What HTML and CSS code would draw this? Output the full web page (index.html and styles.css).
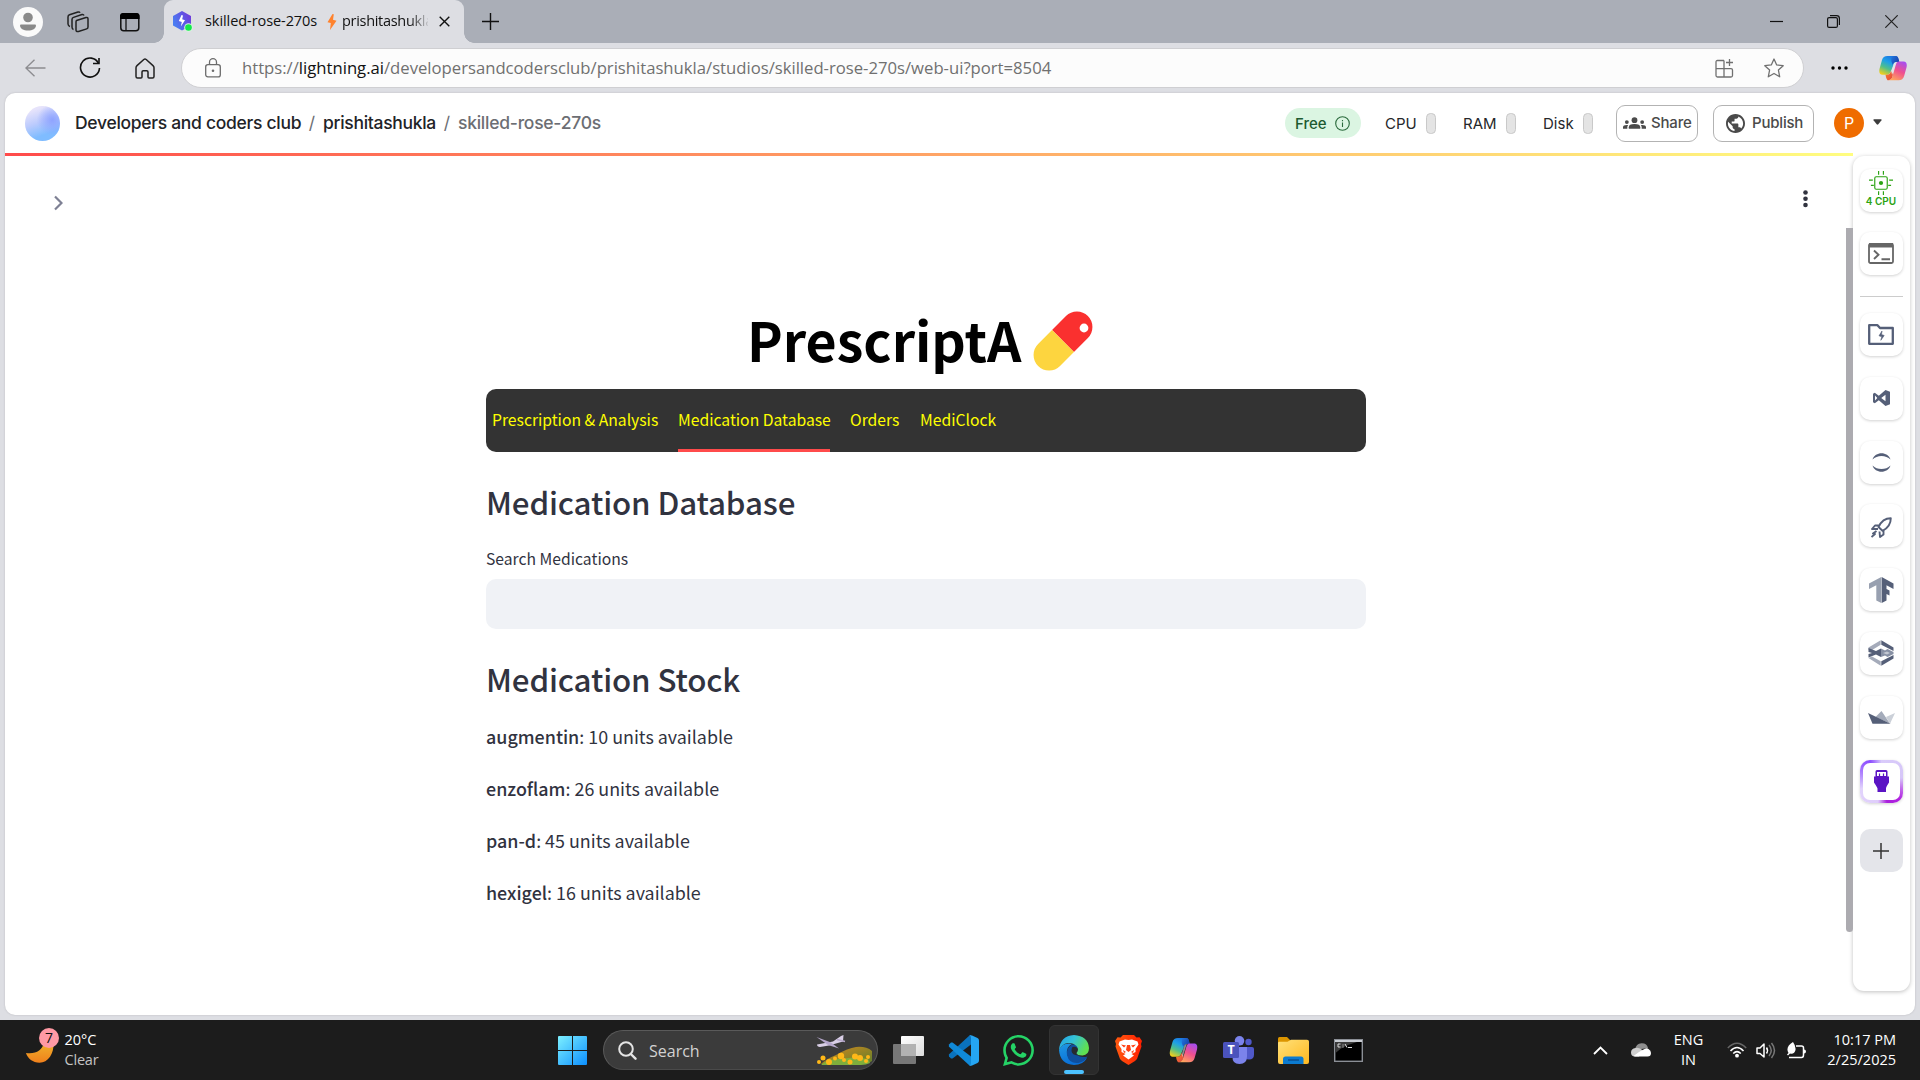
FILE: index.html
```html
<!DOCTYPE html>
<html lang="en">
<head>
<meta charset="utf-8">
<title>skilled-rose-270s</title>
<link rel="stylesheet" href="styles.css">
</head>
<body>
<svg class="defs" width="0" height="0" aria-hidden="true">
  <defs>
    <linearGradient id="hex" x1="0" y1="0.5" x2="1" y2="0"><stop offset="0" stop-color="#4a7df2"/><stop offset="1" stop-color="#7433d8"/></linearGradient>
    <linearGradient id="cpA" x1="0.7" y1="0" x2="0.2" y2="1"><stop offset="0" stop-color="#1b6fe0"/><stop offset="0.35" stop-color="#1d9fe8"/><stop offset="0.65" stop-color="#4fbf8b"/><stop offset="1" stop-color="#f5cf1a"/></linearGradient>
    <linearGradient id="cpB" x1="0.8" y1="0" x2="0.3" y2="1"><stop offset="0" stop-color="#a64df0"/><stop offset="0.5" stop-color="#f0508e"/><stop offset="1" stop-color="#ffa65c"/></linearGradient>
    <linearGradient id="cpC" x1="0" y1="0" x2="1" y2="0.6"><stop offset="0" stop-color="#1f78e0"/><stop offset="1" stop-color="#1a3fa8"/></linearGradient>
    <linearGradient id="cpD" x1="0" y1="0" x2="1" y2="1"><stop offset="0" stop-color="#f8842c"/><stop offset="1" stop-color="#e5413f"/></linearGradient>
    <symbol id="copilot" viewBox="0 0 28 26">
      <path d="M8.500 1H16.500C18.500 1 19 2.500 19.500 4.500L20 6.500H17.500C15.500 6.500 14.800 8 14 11L11.800 16.500C11 19 9.500 19.800 7 19.800H3.500C.5 19.800-.3 17 .6 13.500L3 5C3.800 2.200 5.500 1 8.500 1Z" fill="url(#cpA)"/>
      <path d="M14 1H16.500C18.700 1 19.200 2.500 19.700 4.500L20.300 7H17.500C15.200 7 14.500 7.800 13.700 10L12.300 6C12 3 12.500 1 14 1Z" fill="url(#cpC)"/>
      <path d="M8.500 25.200C7 23.500 6.900 21.500 6.500 19.800H8C10 19.800 11.200 18.800 12 16L14 19C13.500 23 12.500 25.500 8.500 25.200Z" fill="url(#cpD)"/>
      <path d="M20 6.500H24.500C27.500 6.500 28.300 9 27.500 12.500L25.200 20.800C24.400 23.800 22.500 25.300 19.600 25.300H9C12 25.200 13 23 13.800 20.300L16.600 10.500C17.400 7.600 18 6.500 20 6.500Z" fill="url(#cpB)"/>
      <path d="M14.800 8.800Q15.500 7 17.300 6.700L13.300 20Q12.500 19 12.300 17z" fill="#e9e9ec" opacity=".55"/>
    </symbol>
    <linearGradient id="win" x1="0" y1="0" x2="1" y2="1"><stop offset="0" stop-color="#7df0ff"/><stop offset="1" stop-color="#0c8fff"/></linearGradient>
    <linearGradient id="moon" x1="0" y1="0" x2="0" y2="1"><stop offset="0" stop-color="#f0b62c"/><stop offset="1" stop-color="#f0801c"/></linearGradient>
    <linearGradient id="tv" x1="0" y1="0" x2="1" y2="1"><stop offset="0" stop-color="#fff"/><stop offset="1" stop-color="#dcdcdc"/></linearGradient>
    <linearGradient id="edT" x1="0" y1="0" x2="1" y2="0.4"><stop offset="0" stop-color="#1fa0e8"/><stop offset="0.5" stop-color="#35c2d6"/><stop offset="1" stop-color="#5fe052"/></linearGradient>
    <linearGradient id="edL" x1="0" y1="0" x2="0.4" y2="1"><stop offset="0" stop-color="#1f98e4"/><stop offset="1" stop-color="#0a6fd6"/></linearGradient>
    <linearGradient id="brv" x1="0" y1="0" x2="1" y2="0"><stop offset="0" stop-color="#ff5a10"/><stop offset="1" stop-color="#ff1f00"/></linearGradient>
    <linearGradient id="fld" x1="0" y1="0" x2="1" y2="1"><stop offset="0" stop-color="#ffe17a"/><stop offset="1" stop-color="#ffb81f"/></linearGradient>
    <linearGradient id="hill" x1="0" y1="0" x2="1" y2="1"><stop offset="0" stop-color="#d8881c"/><stop offset="1" stop-color="#5d7f2c"/></linearGradient>
  </defs>
</svg>

<div class="screen">
  <div class="tabstrip">
    <div class="strip-left">
      <svg width="30" height="30" viewBox="0 0 30 30"><circle cx="15" cy="15" r="15" fill="#fafafa"/><circle cx="15" cy="10.500" r="4.800" fill="#8a8a8a"/><path d="M8 17.500h14a1 1 0 0 1 1 1c0 3-3.500 5-8 5s-8-2-8-5a1 1 0 0 1 1-1z" fill="#8a8a8a"/></svg>
      <svg width="22" height="22" viewBox="0 0 22 22" fill="none" stroke="#222" stroke-width="1.500" stroke-linejoin="round"><path d="M9.500 9.500 19 6.500q2-.4 2 1.500v8q0 1.500-1.300 1.900L11.500 20.500Q9 21 9 19v-8q0-1 .5-1.500z"/><path d="M6.500 18.500Q5 18 5 16V8.500Q5 7 6.500 6.400L15 3.500q1.500-.4 2 1"/><path d="M3 15.500Q1.200 15 1 13V6Q1 4.200 2.500 3.700L11 1q1.500-.4 2 .8"/></svg>
      <svg width="20" height="20" viewBox="0 0 20 20"><rect x=".8" y="1.800" width="18" height="17" rx="3" fill="none" stroke="#111" stroke-width="1.500"/><path d="M0 7V4Q0 1 3 1h13.500q3 0 3 3v3z" fill="#000"/><path d="M6 7v11" stroke="#111" stroke-width="1.300"/></svg>
    </div>
    <div class="tab">
      <svg width="20" height="21" viewBox="0 0 20 21"><path d="M9 0 18 5V14.500L9 19.500 0 14.500V5z" fill="url(#hex)"/><path d="M8.500 4 5.800 10l3 1L7.800 15.500 12 9.300l-2.800-1L10 4.500z" fill="#fff"/><circle cx="15.500" cy="16.500" r="4.300" fill="#d8f5df"/><circle cx="15.500" cy="16.500" r="3.300" fill="#15e84b"/></svg>
      <span class="tab-title tt-a">skilled-rose-270s</span>
      <svg class="bolt" width="10" height="16" viewBox="0 0 10 16"><path d="M5.500 0 .5 8.200l3.300.8L3 16l6.500-9.300L6 5.800 6.800.2z" fill="#ff822d"/></svg>
      <span class="tab-title tt-b">prishitashukla</span>
      <svg class="tab-close" width="11" height="11" viewBox="0 0 11 11"><path d="M.7.700 10.300 10.300M10.300.700.7 10.300" stroke="#111" stroke-width="1.400"/></svg>
    </div>
    <svg class="newtab" width="17" height="17" viewBox="0 0 17 17"><path d="M8.500 0v17M0 8.500h17" stroke="#111" stroke-width="1.400"/></svg>
    <div class="winbtns">
      <svg width="13" height="13" viewBox="0 0 13 13"><path d="M0 6.500h13" stroke="#111" stroke-width="1.200"/></svg>
      <svg width="13" height="13" viewBox="0 0 13 13" fill="none" stroke="#111" stroke-width="1.200"><rect x=".6" y="2.600" width="9.800" height="9.800" rx="1.500"/><path d="M3 .7h6.500q2.900 0 2.900 2.800V10"/></svg>
      <svg width="13" height="13" viewBox="0 0 13 13"><path d="M.3.300 12.700 12.700M12.700.300.3 12.700" stroke="#222" stroke-width="1.200"/></svg>
    </div>
  </div>

  <div class="toolbar">
    <svg class="nav-ic back" width="21" height="18" viewBox="0 0 21 18" fill="none" stroke="#8c8c90" stroke-width="1.400"><path d="M9.500.8.9 9l8.600 8.200M1 9h19.500"/></svg>
    <svg class="nav-ic reload" width="22" height="22" viewBox="0 0 22 22" fill="none" stroke="#111" stroke-width="1.600"><path d="M19.500 6.300A9.500 9.500 0 1 0 20.500 11"/><path d="M20 1v5.500h-6"/></svg>
    <svg class="nav-ic home" width="20" height="21" viewBox="0 0 20 21" fill="none" stroke="#222" stroke-width="1.500" stroke-linejoin="round"><path d="M8.800 1.500Q10 .5 11.200 1.500L18 7.600q1 .9 1 2.200V18.500q0 1.500-1.500 1.500H14q-1 0-1-1V14q0-1.200-1.200-1.200H8.200Q7 12.800 7 14v5q0 1-1 1H2.500Q1 20 1 18.500V9.800Q1 8.500 2 7.600z"/></svg>
    <div class="omnibox">
      <svg width="16" height="20" viewBox="0 0 16 20" fill="none" stroke="#6c6c6c" stroke-width="1.300"><rect x=".7" y="6.700" width="14.600" height="12.200" rx="2.200"/><path d="M4.500 6.500V4.200a3.500 3.500 0 0 1 7 0V6.500"/><circle cx="8" cy="12.800" r="1.300" fill="#6c6c6c" stroke="none"/></svg>
      <span class="url">https://<b>lightning.ai</b>/developersandcodersclub/prishitashukla/studios/skilled-rose-270s/web-ui?port=8504</span>
      <svg class="apps" width="19" height="19" viewBox="0 0 19 19" fill="none" stroke="#707070" stroke-width="1.300"><path d="M9 1.500H2.500Q1 1.500 1 3V16.500Q1 18 2.500 18H16q1.500 0 1.500-1.500V11Q17.500 9.700 16 9.700H1M9 1.500V18M14.500 0v7M11 3.500h7"/></svg>
      <svg width="20" height="20" viewBox="0 0 20 20" fill="none" stroke="#707070" stroke-width="1.300" stroke-linejoin="round"><path d="M10 1 12.700 6.900 19.200 7.700 14.400 12 15.700 18.800 10 15.500 4.300 18.800 5.600 12 .8 7.700 7.300 6.900z"/></svg>
    </div>
    <svg class="more" width="17" height="4" viewBox="0 0 17 4"><circle cx="2" cy="2" r="1.700"/><circle cx="8.500" cy="2" r="1.700"/><circle cx="15" cy="2" r="1.700"/></svg>
    <svg class="cop" width="28" height="26"><use href="#copilot"/></svg>
  </div>

  <div class="page">
    <header class="appbar">
      <span class="orb"></span>
      <span class="crumb c1">Developers and coders club</span>
      <span class="slash">/</span>
      <span class="crumb c2">prishitashukla</span>
      <span class="slash">/</span>
      <span class="crumb c3">skilled-rose-270s</span>
      <div class="free"><span>Free</span><svg width="15" height="15" viewBox="0 0 15 15" fill="none" stroke="#2a6a3c" stroke-width="1.100"><circle cx="7.500" cy="7.500" r="6.800"/><path d="M7.500 6.500v4.500M7.500 4v1.300"/></svg></div>
      <div class="meter m1"><span>CPU</span><i></i></div>
      <div class="meter m2"><span>RAM</span><i></i></div>
      <div class="meter m3"><span>Disk</span><i></i></div>
      <div class="btn share"><svg width="23" height="12" viewBox="0 0 24 12" fill="#4a4a4a"><circle cx="12" cy="3" r="3"/><path d="M6 12v-1.600Q6 7 12 7t6 3.400V12z"/><circle cx="4" cy="5" r="2"/><circle cx="20" cy="5" r="2"/><path d="M0 12v-1.500Q0 8 4 8q.8 0 1.500.2Q4.500 9.200 4.500 10.500V12zM24 12v-1.500Q24 8 20 8q-.8 0-1.500.2 1 1 1 2.300V12z"/></svg><span>Share</span></div>
      <div class="btn publish"><svg width="19" height="19" viewBox="2 2 20 20" fill="#4a4a4a"><path d="M12 2C6.480 2 2 6.480 2 12s4.480 10 10 10 10-4.480 10-10S17.520 2 12 2zm-1 17.930c-3.950-.49-7-3.850-7-7.930 0-.62.080-1.210.21-1.790L9 15v1c0 1.100.9 2 2 2v1.930zm6.900-2.540c-.26-.81-1-1.390-1.900-1.390h-1v-3c0-.55-.45-1-1-1H8v-2h2c.55 0 1-.45 1-1V7h2c1.100 0 2-.9 2-2v-.41c2.930 1.190 5 4.060 5 7.410 0 2.080-.8 3.970-2.100 5.390z"/></svg><span>Publish</span></div>
      <span class="user">P</span>
      <svg class="caret" width="9" height="6" viewBox="0 0 9 6"><path d="M1 .3h7q1 0 .5 1L5.300 5.300q-.8.800-1.600 0L.5 1.300Q0 .3 1 .3z" fill="#3c3c3c"/></svg>
    </header>
    <div class="body">
      <div class="stage">
        <div class="rainbow"></div>
        <div class="stage-top">
          <svg width="9" height="16" viewBox="0 0 9 16"><path d="M1 1.500 7.500 8 1 14.500" fill="none" stroke="#7e8094" stroke-width="2.200"/></svg>
          <svg width="5" height="18" viewBox="0 0 5 18" fill="#31333f"><circle cx="2.500" cy="2.500" r="2.300"/><circle cx="2.500" cy="8.800" r="2.300"/><circle cx="2.500" cy="15" r="2.300"/></svg>
        </div>
        <main class="content">
          <div class="hero"><h1>PrescriptA</h1><svg width="60" height="60" viewBox="0 0 60 60"><g transform="rotate(45 30 30)"><path d="M14.500 30V10.300a15.500 15.500 0 0 1 31 0V30z" fill="#fa302f"/><path d="M14.500 30V49.700a15.500 15.500 0 0 0 31 0V30z" fill="#fdd53f"/></g><circle cx="51" cy="17" r="4.400" fill="#fff"/></svg></div>
          <nav class="tabs"><span class="t1">Prescription &amp; Analysis</span><span class="t2 on">Medication Database</span><span class="t3">Orders</span><span class="t4">MediClock</span></nav>
          <h2 class="h-db">Medication Database</h2>
          <label>Search Medications</label>
          <div class="field"></div>
          <h2 class="h-st">Medication Stock</h2>
          <p><strong>augmentin</strong><span>: 10 units available</span></p>
          <p><strong>enzoflam</strong><span>: 26 units available</span></p>
          <p><strong>pan-d</strong><span>: 45 units available</span></p>
          <p><strong>hexigel</strong><span>: 16 units available</span></p>
        </main>
        <div class="scrollthumb"></div>
      </div>
      <aside class="rail">
        <div class="tile cpu"><svg width="24" height="24" viewBox="0 0 25 25" fill="none" stroke="#2aa312" stroke-width="1.200"><rect x="6" y="6" width="13" height="13" rx="1.500"/><circle cx="12.500" cy="12.500" r="2.200" fill="#2aa312" stroke="none"/><path d="M10 0v4M15 0v4M10 21v4M15 21v4M0 9.500h4M2 15h3M21 9.500h4M20 15h3"/></svg><span>4 CPU</span></div>
        <div class="tile term"><svg width="26" height="21" viewBox="0 0 26 21"><rect x="1" y="1" width="24" height="19" rx="1.500" fill="none" stroke="#666" stroke-width="1.800"/><path d="M1 0h24v4.500H1z" fill="#666"/><path d="M6 7.500 10.500 11.800 6 16M13.500 16.300H22" fill="none" stroke="#666" stroke-width="1.900"/></svg></div>
        <div class="rule"></div>
        <div class="tile"><svg width="26" height="21" viewBox="0 0 26 21"><path d="M1.200 19.800V1.200H9.500L12 4H24.800V19.800z" fill="none" stroke="#555f78" stroke-width="2.300" stroke-linejoin="round"/><path d="M14 7 11 11.800l2.800 1-1 3.500L16.200 11.500l-2.700-1z" fill="#555f78" stroke="#555f78" stroke-width=".6"/></svg></div>
        <div class="tile"><svg width="17" height="16" viewBox="0 0 17 16" fill="#555f78"><path fill-rule="evenodd" d="M12.500 0 17 1.800V14.200L12.500 16 5.800 10.200 1.800 13.200 0 12.300V3.700L1.800 2.800 5.800 5.800zM12.500 4.800 8.200 8 12.500 11.200zM2 5.600V10.400L4.300 8z"/></svg></div>
        <div class="tile"><svg width="19" height="19" viewBox="0 0 19 19" fill="#555f78"><path d="M.5 6.500C3-1.800 16-1.800 18.500 6.500 14 1.800 5 1.800.5 6.500zM.5 12.500C3 20.800 16 20.800 18.500 12.500 14 17.200 5 17.200.5 12.500z"/></svg></div>
        <div class="tile rocket"><svg width="21" height="21" viewBox="0 0 21 21" fill="none" stroke="#555f78" stroke-width="1.900" stroke-linejoin="round"><path d="M7.500 10C10 4.500 14.500 1.200 19.800 1.200 19.800 6.500 17 11 11.500 13.800zM8.300 8.500H4L1 12l6 0M12.500 13v4.500L9 20 8.500 14.500M5.500 14 2 16.500 4 17 .5 20"/></svg></div>
        <div class="tile"><svg width="25" height="26" viewBox="0 0 25 26"><path d="M12.300 0 0 6.500V12L7.300 8.200V23.500L12.300 26z" fill="#98a0b0"/><path d="M12.700 0V26L17.500 23.500V17L20.500 18.500V13.500L17.500 12V8.300L24.500 12V6.500z" fill="#555f78"/></svg></div>
        <div class="tile"><svg width="26" height="26" viewBox="0 0 26 26"><path d="M.5 7.500 12.700.3V4.700L4.500 9.800V12.200L.5 10zM.5 18 12.700 25.700V21.300L4 16.500z" fill="#a5abba"/><path d="M13.300.3 25.500 7.500V11L13.300 4.800zM13.300 25.700 25.500 18.500V15L13.300 21.300zM.5 8 8 11 13 8.500V17L8 14.500.5 17.500V14L4 13 .5 12z" fill="#555f78"/><path d="M13 8.500 17 10.500 19.500 9 25.500 12V14L19.500 17 17 15.500 13 17z" fill="#8790a4"/><path d="M15 13 19 11.500 22 13 19 14.500z" fill="#c3c8d2"/></svg></div>
        <div class="tile"><svg width="27" height="13" viewBox="0 0 27 13"><path d="M7.500 6 13.500 0 22 12.500z" fill="#a4abba"/><path d="M18 6 27 2 22 12.800z" fill="#cbd0d8"/><path d="M0 2 22.500 12.800H4.500z" fill="#555f78"/></svg></div>
        <div class="tile active"><svg width="15" height="22" viewBox="0 0 15 22"><path d="M1.500 1.500Q1.500 0 3 0h9q1.500 0 1.500 1.500V6.500H15V12.500Q12 17 12 18.500V22H3.500V18.500Q3 17 0 12.500V6.500H1.500z" fill="#5b14c4"/><path d="M3 2h9v4H3z" fill="#fff"/><path d="M5.500 3.500V6M9.500 3.500V6" stroke="#5b14c4" stroke-width="1.200"/></svg></div>
        <div class="tile add"><svg width="16" height="16" viewBox="0 0 16 16"><path d="M8 0v16M0 8h16" stroke="#333" stroke-width="1.500"/></svg></div>
      </aside>
    </div>
  </div>

  <footer class="taskbar">
    <div class="weather">
      <div class="moon"><svg width="28" height="26" viewBox="0 0 28 26"><path d="M27.500 6C28 17 22 25.700 13.500 25.700 7 25.700 1.500 21.500 0 16 10 17.500 16 13 18 6Q22 2 27.500 6z" fill="url(#moon)"/></svg><span class="badge">7</span></div>
      <div class="stack"><span class="w1">20°C</span><span class="w2">Clear</span></div>
    </div>
    <div class="dock">
      <div class="slot start"><svg width="29" height="29" viewBox="0 0 29 29" fill="url(#win)"><path d="M1 0H14V14H0V1Q0 0 1 0zM15 0H28Q29 0 29 1V14H15zM0 15H14V29H1Q0 29 0 28zM15 15H29V28Q29 29 28 29H15z"/></svg></div>
      <div class="search">
        <svg width="19" height="19" viewBox="0 0 19 19" fill="none" stroke="#e4e4e4"><circle cx="8" cy="8" r="6.800" stroke-width="2"/><path d="M12.800 13 17.500 17.700" stroke-width="2.400" stroke-linecap="round"/></svg>
        <span>Search</span>
        <svg class="art" width="58" height="31" viewBox="0 0 58 31"><path d="M20 20Q32 13 40 12 50 11 56 16V26Q52 29 45 29H5Q10 24 20 20z" fill="url(#hill)"/><path d="M5 30Q12 23 25 24 40 21 52 24L54 28Q50 30 45 30z" fill="#7fae3c"/><g fill="#ffb818"><circle cx="3" cy="27" r="2"/><circle cx="7" cy="23" r="2.500"/><circle cx="13" cy="27" r="3"/><circle cx="19" cy="23.500" r="2"/><circle cx="25" cy="21" r="3.200"/><circle cx="28" cy="25" r="2"/><circle cx="34" cy="27" r="2.500"/><circle cx="39" cy="21.500" r="3"/><circle cx="44" cy="23" r="3"/><circle cx="50" cy="26" r="2"/><circle cx="52" cy="22" r="2"/></g><path d="M1 9.500 17 6.500 25 1 27.500 0 27 6.500 13 10.500 4 12Q1 11.500 1 9.500z" fill="#d9cfe6"/><path d="M.5 2 15 7.500 23 13.500 12 10z" fill="#b6a8cc"/><path d="M21 4.500 29 6.500" stroke="#b6a8cc" stroke-width="1.500"/></svg>
      </div>
      <div class="slot tview"><svg width="31" height="28" viewBox="0 0 31 28"><rect x="8" y="0" width="23" height="20" rx="1" fill="url(#tv)"/><rect x="0" y="8" width="23" height="20" rx="1" fill="#777"/><path d="M8 8H23V20H8z" fill="#b2b2b2"/></svg></div>
      <div class="slot"><svg width="31" height="31" viewBox="0 0 31 31"><path d="M22 0 .8 19.500 1 21.500 3 23.500 4.500 23.500 23 9.500V.8z" fill="#0a72bd"/><path d="M22 31 .8 11.500 1 9.500 3 7.500 4.500 7.500 23 21.500V30z" fill="#1089d8"/><path d="M21.500 30.800Q23 31 24 30.500L29.500 28Q31 27.200 31 25.500V5.500Q31 3.800 29.500 3L24 .4Q22.500 0 21.500.3 23 1 23 3V28Q23 30 21.500 30.800z" fill="#25a5f2"/></svg></div>
      <div class="slot"><svg width="31" height="31" viewBox="0 0 24 24" fill="#25d366"><path d="M17.472 14.382c-.297-.149-1.758-.867-2.030-.967-.273-.099-.471-.148-.67.150-.197.297-.767.966-.94 1.164-.173.199-.347.223-.644.075-.297-.15-1.255-.463-2.390-1.475-.883-.788-1.480-1.761-1.653-2.059-.173-.297-.018-.458.130-.606.134-.133.298-.347.446-.52.149-.174.198-.298.298-.497.099-.198.050-.371-.025-.52-.075-.149-.669-1.612-.916-2.207-.242-.579-.487-.5-.669-.51-.173-.008-.371-.010-.57-.010-.198 0-.52.074-.792.372-.272.297-1.040 1.016-1.040 2.479 0 1.462 1.065 2.875 1.213 3.074.149.198 2.096 3.200 5.077 4.487.709.306 1.262.489 1.694.625.712.227 1.360.195 1.871.118.571-.085 1.758-.719 2.006-1.413.248-.694.248-1.289.173-1.413-.074-.124-.272-.198-.57-.347m-5.421 7.403h-.004a9.870 9.870 0 0 1-5.031-1.378l-.361-.214-3.741.982.998-3.648-.235-.374a9.860 9.860 0 0 1-1.510-5.260c.001-5.450 4.436-9.884 9.888-9.884 2.640 0 5.122 1.030 6.988 2.898a9.825 9.825 0 0 1 2.893 6.994c-.003 5.450-4.437 9.884-9.885 9.884m8.413-18.297A11.815 11.815 0 0 0 12.050 0C5.495 0 .16 5.335.157 11.892c0 2.096.547 4.142 1.588 5.945L.057 24l6.305-1.654a11.882 11.882 0 0 0 5.683 1.448h.005c6.554 0 11.890-5.335 11.893-11.893a11.821 11.821 0 0 0-3.480-8.413z"/></svg></div>
      <div class="slot current"><svg width="30" height="30" viewBox="0 0 30 30"><path d="M0 15Q4 7 13 9 7 12 8 19 10 27 19 26.500 24 26 28 23 24 30 15 30 1 29 0 15z" fill="url(#edL)"/><path d="M13 9.500Q19 9 20 13 17 12.500 16.500 16 17 21.500 24 22 27 22 28.500 21.500 26 26.500 19.500 28 10 29 8 20 7 13 13 9.500z" fill="#0f4f9e"/><path d="M13.500 12Q18 11 18.500 14 17 15 17 17.500 17.500 19.500 19 20.500 13 20 12.500 16 12.500 13 13.500 12z" fill="#262a30"/><path d="M0 15Q1 1 15 0 29 1 30 13 30 20 23.500 20.500 18 20.500 17.500 18 20.500 14.500 17.500 11 14 7.500 8.500 8 3 9 0 15z" fill="url(#edT)"/></svg><i></i></div>
      <div class="slot"><svg width="27" height="30" viewBox="0 0 27 30"><path d="M8 0H19L21.500 2.500 24.500 2.300 27 6 26 9 26.500 11.500 22 24 20 26 13.500 30 7 26 5 24 .5 11.500 1 9 0 6 2.500 2.300 5.500 2.500z" fill="url(#brv)"/><path d="M13.500 5 17 4.500 22.500 6.500 23.500 9.500 20.500 14 20.500 17 16.500 19 19 20.500 13.500 24.500 8 20.500 10.500 19 6.500 17V14L3.500 9.500 4.500 6.500 10 4.500z" fill="#fff"/><path d="M6 9.500 11 10.500 9 12.500zM21 9.500 16 10.500 18 12.500zM12 10h3l1 5-2.500 2L11 15zM8 15l3 2-2 1zM19 15l-3 2 2 1z" fill="#ff4012"/></svg></div>
      <div class="slot cp"><svg width="29" height="26"><use href="#copilot"/></svg></div>
      <div class="slot"><svg width="31" height="28" viewBox="0 0 31 28"><circle cx="25.500" cy="6" r="3.200" fill="#5059c9"/><path d="M20 11h9q2 0 2 2v5.500q0 5-5 5t-6-5z" fill="#5059c9"/><circle cx="16.500" cy="4.800" r="4.800" fill="#7b83eb"/><path d="M10 11h14v9.500q0 7.500-7.500 7.500T9.500 20z" fill="#7b83eb"/><rect x="0" y="6" width="16" height="16" rx="1.500" fill="#4b53bc"/><text class="teams-t" x="8" y="18.300" text-anchor="middle">T</text></svg></div>
      <div class="slot"><svg width="31" height="27" viewBox="0 0 31 27"><path d="M0 1.500Q0 0 1.500 0H9L12.500 3.500V8H0z" fill="#dc9500"/><path d="M0 6Q0 4.800 1.200 4.800H9.500L13 2.800H29Q31 2.800 31 4.500V25Q31 27 29 27H2Q0 27 0 25z" fill="url(#fld)"/><path d="M5 27V22Q5 19.500 7.500 19.500h15.500Q25.500 19.500 25.500 22V27z" fill="#0c7bd0"/><path d="M10 23h11" stroke="#0a4f92" stroke-width="1.500"/></svg></div>
      <div class="slot"><svg width="29" height="23" viewBox="0 0 29 23"><rect x=".7" y=".7" width="27.600" height="21.600" fill="#000" stroke="#8b8f96" stroke-width="1.400"/><path d="M1.500 1.500H27.500L14 6 7 9.500 1.500 14z" fill="#3b3b3b"/><path d="M1 2h27" stroke="#c8ccd2" stroke-width="2"/><path d="M6.500 5H4v3h2.500M9 5.500v1M9 7.500v1M11 5l2 3.500M14 8.500h4" stroke="#ddd" fill="none"/></svg></div>
    </div>
    <div class="tray">
      <svg class="up" width="15" height="9" viewBox="0 0 15 9"><path d="M1 8 7.500 1.500 14 8" fill="none" stroke="#fff" stroke-width="1.800"/></svg>
      <svg class="cloud" width="20" height="14" viewBox="0 0 20 14"><path d="M4 7Q5 0 11 .3 16 .5 17 5z" fill="#8f8f8f"/><path d="M0 9.500Q0 5.500 4.500 5 8 4 12 7.500L8 13.500H4Q0 13.500 0 9.500z" fill="#cfcfcf"/><path d="M2.500 13Q8 8.500 13.500 6 16 4.500 17.500 6 20 7.500 20 10 20 13.500 16.500 13.500H4z" fill="#fff"/></svg>
      <div class="stack lang"><span class="l1">ENG</span><span class="l2">IN</span></div>
      <svg class="wifi" width="20" height="16" viewBox="0 0 20 16" fill="none"><path d="M.8 6Q10-3.500 19.200 6" stroke="#666" stroke-width="1.500"/><path d="M3.500 9Q10 2 16.500 9M6.200 11.500Q10 7.800 13.800 11.500" stroke="#fff" stroke-width="1.600"/><circle cx="10" cy="13.700" r="1.900" fill="#fff"/></svg>
      <svg class="vol" width="20" height="17" viewBox="0 0 20 17" fill="none" stroke="#fff" stroke-width="1.500"><path d="M1 6H4L8 2V15L4 11.500H1z" stroke-linejoin="round"/><path d="M10.500 5.500q2 3 0 6"/><path d="M13 3q4.500 5.500 0 11M15.500 1q6 7.500 0 15" stroke="#777"/></svg>
      <svg class="bat" width="20" height="17" viewBox="0 0 20 17"><path d="M10 4H15.500Q17.500 4 17.500 6V13Q17.500 15.500 15.500 15.500H3" fill="none" stroke="#fff" stroke-width="1.500"/><path d="M18 7.500q2 0 2 2t-2 2z" fill="#fff"/><path d="M7 0Q10 4 9.500 8 8.500 12.500 4 11.500L2 13.500 1 12.500 2.500 11Q-1 5 7 0z" fill="#fff"/></svg>
      <div class="stack clock"><span class="k1">10:17 PM</span><span class="k2">2/25/2025</span></div>
    </div>
  </footer>
</div>
</body>
</html>
```
FILE: styles.css
```css
* { box-sizing: border-box; }
body { margin: 0; background: #dddee3; font-family: "Open Sans", "Noto Sans", sans-serif; }
svg { display: block; flex: none; }
.defs { position: absolute; }
span, h1, h2, label { white-space: nowrap; }
.screen { width: 1920px; height: 1080px; display: flex; flex-direction: column; overflow: hidden; }

/* tab strip */
.tabstrip { height: 43px; background: #aaaeb7; display: flex; align-items: center; }
.strip-left { width: 164px; padding-left: 13px; display: flex; align-items: center; gap: 24px; }
.strip-left svg:nth-child(3) { margin-left: 7px; }
.tab { position: relative; width: 300px; height: 43px; background: #dddee3; border-radius: 9px 9px 0 0; display: flex; align-items: center; padding-left: 9px; }
.tab::before, .tab::after { content: ""; position: absolute; bottom: 0; width: 10px; height: 10px; }
.tab::before { left: -10px; background: radial-gradient(circle at 0 0, transparent 9.5px, #dddee3 10px); }
.tab::after { right: -10px; background: radial-gradient(circle at 100% 0, transparent 9.5px, #dddee3 10px); }
.tab-title { font-size: 14.5px; line-height: 20px; color: #111; margin-top: -2px; }
.tt-a { margin-left: 12px; width: 122px; letter-spacing: -0.07px; }
.bolt { margin-right: 5px; }
.tt-b { width: 86px; overflow: hidden; letter-spacing: -0.3px; -webkit-mask-image: linear-gradient(90deg, #000 68px, transparent 88px); mask-image: linear-gradient(90deg, #000 68px, transparent 88px); }
.tab-close { margin-left: 11px; }
.newtab { margin-left: 18px; }
.winbtns { margin-left: auto; margin-right: 22.5px; display: flex; gap: 44.3px; }

/* toolbar */
.toolbar { height: 50px; display: flex; align-items: center; }
.back { margin-left: 25px; }
.reload { margin-left: 33px; }
.home { margin-left: 34px; }
.omnibox { margin-left: 26px; width: 1623px; height: 40px; border: 1px solid #cfcfd2; border-radius: 20px; background: #fcfcfc; display: flex; align-items: center; padding: 0 19px 0 23px; }
.url { margin: -2px 0 0 21px; font-size: 16.7px; color: #707070; letter-spacing: -0.01px; }
.url b { font-weight: 400; color: #111; }
.apps { margin-left: auto; margin-right: 30px; }
.more { margin-left: 27px; }
.cop { margin-left: 31px; }

/* page */
.page { height: 922px; width: 1910px; margin: 0 0 0 5px; background: #fff; border-radius: 10px; display: flex; flex-direction: column; box-shadow: 0 0 2px #b5b5ba; }
.appbar { height: 60px; padding-left: 20px; display: flex; align-items: center; font-family: Inter, "Liberation Sans", sans-serif; }
.orb { width: 35px; height: 35px; border-radius: 50%; background: radial-gradient(circle at 78% 40%, #8fa3ff 0, rgba(143,163,255,0) 45%), linear-gradient(160deg, #e6e3fb 15%, #bccbfd 45%, #7fbcff 75%); }
.crumb { font-size: 17.5px; font-weight: 500; color: #222327; margin-top: -1px; letter-spacing: -0.3px; }
.c1 { margin-left: 15px; width: 226px; }
.slash { width: 22px; margin-top: -1px; text-align: center; font-size: 17.5px; color: #6c6e73; }
.c2 { width: 113px; }
.c3 { color: #6c6e73; letter-spacing: -0.25px; }
.free { margin-left: auto; width: 76px; height: 30px; border-radius: 15px; background: #dbf5e2; color: #1d5a31; font-size: 15px; font-weight: 500; display: flex; align-items: center; padding-left: 10px; }
.free span { width: 40px; }
.meter { display: flex; align-items: center; justify-content: space-between; font-size: 15px; color: #26272b; }
.meter i { width: 10px; height: 21px; border-radius: 4.5px; background: #e4e4e4; border: 1px solid #c9c9c9; }
.m1 { width: 51px; margin-left: 24px; }
.m2 { width: 53px; margin-left: 27px; }
.m3 { width: 50px; margin-left: 27px; }
.btn { height: 37px; border: 1px solid #b3b3b3; border-radius: 9px; display: flex; align-items: center; font-size: 15px; font-weight: 500; color: #4a4a4a; }
.btn span { margin-top: -1px; letter-spacing: -0.2px; }
.share { width: 82px; margin-left: 23px; padding-left: 6px; gap: 5px; }
.publish { width: 101px; margin-left: 15px; padding-left: 12px; gap: 7px; }
.user { margin-left: 20px; width: 30px; height: 30px; border-radius: 50%; background: #ef6c00; color: #fff; font-size: 16px; line-height: 30px; text-align: center; }
.caret { margin: 0 33px 3px 9px; }
.body { display: flex; height: 862px; }
.stage { width: 1848px; position: relative; }
.rainbow { height: 3px; background: linear-gradient(90deg, #ff4b4b, #fffd80); }
.stage-top { display: flex; justify-content: space-between; padding: 37px 45px 0 49px; height: 72px; }
.stage-top svg:first-child { margin-top: 2px; }
.stage-top svg:last-child { margin-top: -3px; }
.content { width: 880px; margin: 0 0 0 481px; font-family: "Noto Sans CJK SC", "Noto Sans", sans-serif; color: #31333f; }
.hero { height: 161px; padding: 83px 0 0 261px; display: flex; gap: 13px; color: #000; }
.hero h1 { margin: -8px 0 0; width: 273px; font-size: 53.7px; line-height: 72px; font-weight: 700; }
.tabs { height: 63px; background: #333; border-radius: 10px; display: flex; padding-left: 6px; gap: 20px; color: #ff0; font-size: 15.7px; line-height: 62px; font-weight: 400; }
.t1 { width: 166px; }
.t2 { width: 152px; }
.t3 { width: 50px; }
.on { border-bottom: 3px solid #ff4b4b; }
h2 { margin: 0; font-size: 31.3px; line-height: 44px; font-weight: 500; letter-spacing: -0.14px; }
.h-db { padding-top: 28px; }
label { display: block; margin-top: 23px; font-size: 15.7px; line-height: 24px; }
.field { margin-top: 8px; height: 50px; border-radius: 10px; background: #f0f2f6; }
.h-st { padding-top: 28px; margin-bottom: 20px; }
p { margin: 0 0 22px; font-size: 17.9px; line-height: 30px; }
strong { font-weight: 500; }
.scrollthumb { position: absolute; right: 0; top: 75px; width: 7px; height: 704px; background: #acabb0; border-radius: 0 0 4px 4px; }

/* rail */
.rail { margin-top: 3px; width: 57px; height: 835px; border-radius: 11px; background: #fff; box-shadow: 0 1px 4px rgba(0,0,0,.25); display: flex; flex-direction: column; align-items: center; padding: 13px 1px 0 0; gap: 20.8px; }
.tile { width: 43px; height: 43px; flex: none; border-radius: 10px; background: #fff; box-shadow: 0 1px 3px rgba(0,0,0,.18); display: flex; align-items: center; justify-content: center; }
.cpu { flex-direction: column; font: 600 10px/12px Inter, sans-serif; color: #2aa312; padding-bottom: 3px; }
.term { margin-top: -1px; }
.rule { width: 43px; height: 1px; background: #ccc; margin: 0 0 -4.4px; flex: none; }
.rocket { padding-top: 4px; }
.active { border: 3px solid transparent; background: linear-gradient(#fff,#fff) padding-box, conic-gradient(from 330deg, #8d4dff, #d9cbfa 30deg, #d6c6f8 110deg, #b020e0 165deg, #a920dc 195deg, #dfcdfb 220deg, #e2d4fc 280deg, #9b63ff 340deg, #8d4dff) border-box; }
.add { background: #e4e5ea; margin-top: 6px; box-shadow: none; }

/* taskbar */
.taskbar { margin-top: 5px; height: 60px; background: #1c1c1c; color: #fff; display: flex; position: relative; font-size: 14.5px; }
.weather { display: flex; padding: 8px 0 0 26px; width: 548px; }
.moon { position: relative; width: 38.5px; padding-top: 9px; }
.badge { position: absolute; left: 13px; top: 0; width: 20px; height: 20px; border-radius: 50%; background: #ff99a4; color: #111; font-size: 14px; line-height: 20px; text-align: center; }
.stack { display: flex; flex-direction: column; line-height: 20px; padding-top: 2px; }
.w2 { color: #c4c4c4; letter-spacing: -0.2px; }
.dock { display: flex; align-items: center; gap: 5px; }
.slot { width: 50px; height: 50px; display: flex; align-items: center; justify-content: center; }
.start { padding-right: 2px; }
.search { width: 275px; height: 40px; border-radius: 20px; background: #3b3b3b; border: 1px solid #5a5a5a; border-bottom-color: #4a4a4a; display: flex; align-items: center; padding-left: 14px; margin-right: 0.7px; }
.search span { margin: 1px 0 0 12px; font-size: 16px; color: #d2d2d2; }
.art { margin-left: auto; margin-right: 3px; }
.teams-t { font: 700 12.5px "Open Sans", sans-serif; fill: #fff; }
.current { position: relative; background: #2a2a2a; border: 1px solid #333; border-radius: 6px; }
.current i { position: absolute; bottom: 0; left: 14px; width: 20px; height: 4px; border-radius: 2px; background: #4cc2ff; }
.tray { margin-left: auto; display: flex; align-items: center; padding-right: 24px; }
.tray .stack { padding: 0; }
.up { margin-right: 1px; }
.cloud { margin-left: 22px; }
.lang { margin-left: 21px; width: 33px; align-items: center; }
.wifi { margin-left: 22px; }
.vol { margin-left: 9px; }
.bat { margin-left: 10px; }
.clock { margin-left: 21px; width: 69px; align-items: flex-end; }
```
